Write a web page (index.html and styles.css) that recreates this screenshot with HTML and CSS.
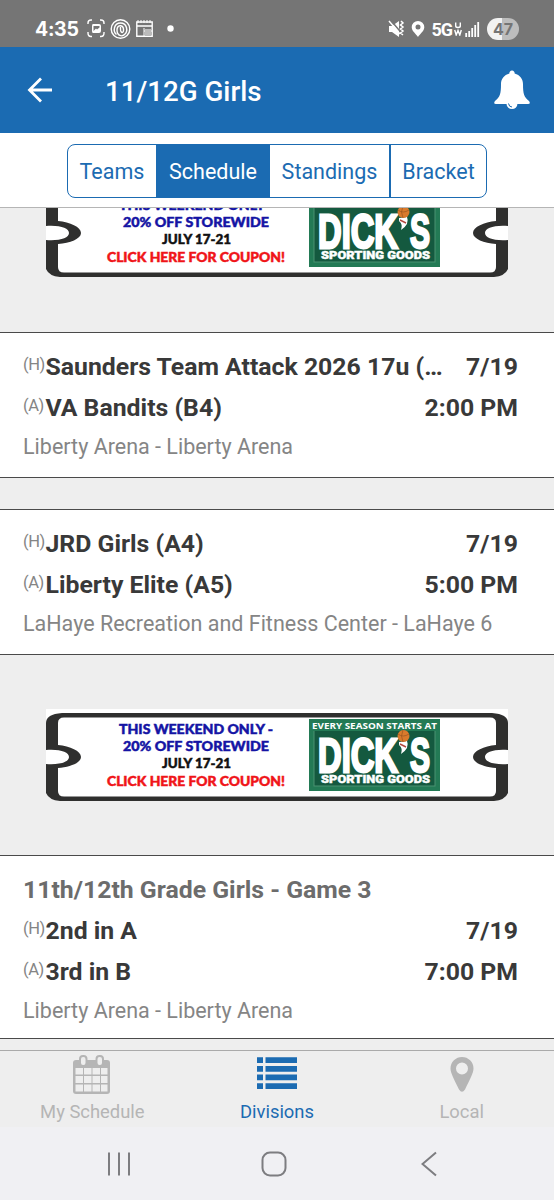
FILE: index.html
```html
<!DOCTYPE html>
<html lang="en">
<head>
  <meta charset="UTF-8" />
  <meta name="viewport" content="width=device-width, initial-scale=1.0" />
  <title>11/12G Girls - Schedule</title>
  <link rel="stylesheet" href="styles.css">
</head>
<body>
  <!-- ticket coupon, used for every ad slot -->
  <svg class="defs" width="0" height="0" aria-hidden="true">
    <symbol id="coupon" viewBox="0 0 462 92">
      <rect width="462" height="92" fill="#fff" />
      <path fill="#2f2f2e" d="M16 4H446Q462 5 462 14V92H0V14Q0 5 16 4Z" />
      <path fill="#fff" d="M18 8.500H444Q450 8.500 450 14V82Q450 87.500 444 87.500H18Q12 87.500 12 82V14Q12 8.500 18 8.500Z" />
      <path fill="#2f2f2e" d="M0 36H12C24 37 35 42 35 48S24 58 12 59H0ZM462 36H450C438 37 427 42 427 48S438 58 450 59H462Z" />
      <path fill="#fff" d="M0 41C14 40 23 43 23 48S14 56 0 55ZM462 41C448 40 439 43 439 48S448 56 462 55Z" />
      <path fill="#eee" d="M0 84Q3 91 14 92H0ZM462 84Q459 91 448 92H462Z" />
      <g class="coupon-text">
        <text x="73" y="24.500" fill="#1414a4" stroke="#1414a4" textLength="154" lengthAdjust="spacingAndGlyphs">THIS WEEKEND ONLY -</text>
        <text x="77" y="41.500" fill="#1414a4" stroke="#1414a4" textLength="146" lengthAdjust="spacingAndGlyphs">20% OFF STOREWIDE</text>
        <text x="116" y="59" fill="#111" stroke="#111" textLength="69" lengthAdjust="spacingAndGlyphs">JULY 17-21</text>
        <text x="61" y="76.500" fill="#f01418" stroke="#f01418" textLength="178" lengthAdjust="spacingAndGlyphs">CLICK HERE FOR COUPON!</text>
      </g>
      <rect x="263" y="10" width="131" height="72" fill="#237a55" />
      <rect x="268" y="15" width="121" height="62" fill="#14593f" stroke="#4b9273" />
      <rect x="264" y="11" width="129" height="11" fill="#237a55" />
      <g fill="#fff" stroke="#fff">
        <text class="logo-small" x="266" y="20" textLength="125" lengthAdjust="spacingAndGlyphs">EVERY SEASON STARTS AT</text>
        <text class="logo-big" x="0" y="0" transform="translate(272 63) scale(1 1.750)" textLength="80" lengthAdjust="spacingAndGlyphs">DICK</text>
        <text class="logo-big" x="0" y="0" transform="translate(364 63) scale(1 1.750)" textLength="20" lengthAdjust="spacingAndGlyphs">S</text>
        <text class="logo-sub" x="275" y="74" textLength="109" lengthAdjust="spacingAndGlyphs">SPORTING GOODS</text>
      </g>
      <path fill="#fff" d="M353 33L361 32Q364 39 355 45Q357 39 353 36Z" />
      <path d="M354 35L360 38" stroke="#b4493e" stroke-width="1.500" />
      <circle cx="357.500" cy="27" r="6" fill="#d97a2c" />
      <path d="M352 25Q357 29 363 25M357 21Q354 27 357 33" fill="none" stroke="#9a5420" stroke-width=".7" />
    </symbol>
  </svg>

  <div class="status-bar">
    <span class="clock">4:35</span>
    <svg class="status-left" width="92" height="22" viewBox="0 0 92 22" fill="none" stroke="#fff" stroke-width="1.400">
      <path d="M1 6V5Q1 2 4 2H5M13 2H14Q17 2 17 5V6M17 14V15Q17 18.500 14 18.500H13M5 18.500H4Q1 18.500 1 15V14" />
      <path fill="#fff" stroke="none" fill-rule="evenodd" d="M6 6H12Q14 6 14 8V13Q14 15 12 15H6Q5 15 5 13V8Q5 6 6 6ZM6.500 13L9 10.500L10 11.500L12.500 9.500V8H6.500Z" />
      <circle cx="33.500" cy="11" r="9.300" />
      <path d="M29.500 16.500C25.500 13 27 5 33.500 5S41.500 13 37.500 16.500C35 19 30 18 30 12C30 7 36 6 36.500 11C37 16 33 16 33.500 9" />
      <path d="M49.800 4H65.200V18.200H49.800ZM50 8H65" />
      <path d="M51 2V5M54 2V5M57 2V5M60 2V5M63 2V5" stroke-width="1" />
      <path d="M57 10V18M57 13H65" stroke-width="1" />
      <path d="M58 11H64V17.500H58Z" fill="#bbb" stroke="none" />
      <circle cx="83.500" cy="10.500" r="3.200" fill="#fff" stroke="none" />
    </svg>
    <div class="status-right">
      <svg width="38" height="20" viewBox="0 0 38 20">
        <path fill="#fff" d="M1 7H4L11 2V18L4 13H1Z" />
        <path d="M2.500 1L13.500 14" stroke="#757575" stroke-width="1.500" />
        <path d="M1 2L12 15M13 2L15 4L12.500 6L15 8L12.500 10L15 12L12.500 14L15 16" fill="none" stroke="#fff" stroke-width="1.500" />
        <path fill="#fff" fill-rule="evenodd" d="M30 2A6.300 6.300 0 0 1 36.300 8.300C36.300 12 32 15 30 18C28 15 23.700 12 23.700 8.300A6.300 6.300 0 0 1 30 2ZM30 5.500A2.500 2.500 0 1 0 30 10.500A2.500 2.500 0 1 0 30 5.500Z" />
      </svg>
      <span class="network">5G</span>
      <svg class="network-uw" width="8" height="14" viewBox="0 0 8 14" fill="none" stroke="#fff" stroke-width="1.400">
        <path d="M1.700 .5V4Q1.700 5.500 4 5.500T6.300 4V.5M.7 8L2.200 13L4 8.500L5.800 13L7.300 8" />
      </svg>
      <svg class="signal" width="15" height="16" viewBox="0 0 15 16">
        <path d="M1.200 12V16M4.200 10V16M7.200 7V16M10.200 4V16M13.200 1V16" stroke="#fff" stroke-width="1.800" />
      </svg>
      <span class="battery">47</span>
    </div>
  </div>

  <header class="app-bar">
    <svg width="26" height="26" viewBox="0 0 26 26" fill="none" stroke="#fff" stroke-width="2.800">
      <path d="M25 13H2M14 1.500L2.500 13L14 24.500" />
    </svg>
    <h1>11/12G Girls</h1>
    <svg class="bell" width="38" height="40" viewBox="0 0 38 40">
      <path fill="#fff" d="M19 0.500A2.600 2.600 0 0 1 21.600 3.500C27 5 30 9 30 14C30 24 31 27 36 31Q38 34 35 34H3Q0 34 2 31C7 27 8 24 8 14C8 9 11 5 16.400 3.500A2.600 2.600 0 0 1 19 0.500Z" />
      <circle cx="19" cy="33.500" r="5.500" fill="#fff" />
      <path d="M15.500 33.500Q16 37 19 37" fill="none" stroke="#1b6bb2" stroke-width="1" />
    </svg>
  </header>

  <nav class="tabs">
    <div class="segmented">
      <a class="teams">Teams</a>
      <a class="schedule active">Schedule</a>
      <a class="standings">Standings</a>
      <a class="bracket">Bracket</a>
    </div>
  </nav>

  <main class="games">
    <div class="ad ad-first"><svg width="462" height="92"><use href="#coupon" /></svg></div>

    <section class="game">
      <div class="row"><small>(H)</small><b class="team">Saunders Team Attack 2026 17u (…</b><b>7/19</b></div>
      <div class="row"><small>(A)</small><b class="team">VA Bandits (B4)</b><b>2:00 PM</b></div>
      <p class="venue">Liberty Arena - Liberty Arena</p>
    </section>

    <section class="game second">
      <div class="row"><small>(H)</small><b class="team">JRD Girls (A4)</b><b>7/19</b></div>
      <div class="row"><small>(A)</small><b class="team">Liberty Elite (A5)</b><b>5:00 PM</b></div>
      <p class="venue">LaHaye Recreation and Fitness Center - LaHaye 6</p>
    </section>

    <div class="ad"><svg width="462" height="92"><use href="#coupon" /></svg></div>

    <section class="game last">
      <h2 class="row">11th/12th Grade Girls - Game 3</h2>
      <div class="row"><small>(H)</small><b class="team">2nd in A</b><b>7/19</b></div>
      <div class="row"><small>(A)</small><b class="team">3rd in B</b><b>7:00 PM</b></div>
      <p class="venue">Liberty Arena - Liberty Arena</p>
    </section>
  </main>

  <nav class="bottom-tabs">
    <a>
      <svg width="38" height="42" viewBox="0 0 38 42">
        <rect x="0" y="5" width="37" height="34" rx="3" fill="#b5b5b5" />
        <path fill="#eee" d="M2.500 13H10V19.500H2.500ZM11 13H18.500V19.500H11ZM19.500 13H27V19.500H19.500ZM28 13H34.500V19.500H28ZM2.500 21H10V28H2.500ZM11 21H18.500V28H11ZM19.500 21H27V28H19.500ZM28 21H34.500V28H28ZM2.500 29.500H10V36.500H2.500ZM11 29.500H18.500V36.500H11ZM19.500 29.500H27V36.500H19.500ZM28 29.500H34.500V36.500H28Z" />
        <rect x="7" y="1" width="6.500" height="10" rx="3" fill="#eee" stroke="#b5b5b5" stroke-width="2" />
        <rect x="23.500" y="1" width="6.500" height="10" rx="3" fill="#eee" stroke="#b5b5b5" stroke-width="2" />
      </svg>
      <span>My Schedule</span>
    </a>
    <a class="active">
      <svg width="40" height="42" viewBox="0 0 40 42" fill="#1b6bb2">
        <path d="M0 2.300H6V8H0ZM8.500 2.300H40V8H8.500ZM0 11H6V16.700H0ZM8.500 11H40V16.700H8.500ZM0 19.600H6V25.300H0ZM8.500 19.600H40V25.300H8.500ZM0 28.300H6V34H0ZM8.500 28.300H40V34H8.500Z" />
      </svg>
      <span>Divisions</span>
    </a>
    <a>
      <svg width="24" height="42" viewBox="0 0 24 42">
        <path fill="#b5b5b5" fill-rule="evenodd" d="M12 2A11.500 11.500 0 0 1 23.500 13.500C23.500 18 20 24 15 34.500Q12 39 9 34.500C4 24 .5 18 .5 13.500A11.500 11.500 0 0 1 12 2ZM12 7.500A6 6 0 1 0 12 19.500A6 6 0 1 0 12 7.500Z" />
      </svg>
      <span>Local</span>
    </a>
  </nav>

  <div class="system-nav">
    <svg width="24" height="26" viewBox="0 0 24 26" stroke="#7d7d80" stroke-width="2"><path d="M2 1.500V24.500M12 1.500V24.500M22 1.500V24.500" /></svg>
    <svg class="home" width="26" height="26" viewBox="0 0 26 26" fill="none" stroke="#7d7d80" stroke-width="2"><rect x="1.500" y="1.500" width="23" height="23" rx="7.500" /></svg>
    <svg class="back" width="16" height="26" viewBox="0 0 16 26" fill="none" stroke="#7d7d80" stroke-width="2"><path d="M15 1.500L1.500 13L15 24.500" /></svg>
  </div>
</body>
</html>
```
FILE: styles.css
```css
:root {
  --blue: #1b6bb2;
  --bg: #eeeeee;
  --line: #4a4a4a;
  --text: #393939;
  --muted: #858585;
  --inactive: #b5b5b5;
}
* {
  box-sizing: border-box;
}
body {
  margin: 0;
  height: 1200px;
  display: flex;
  flex-direction: column;
  overflow: hidden;
  font-family: Roboto, sans-serif;
  background: var(--bg);
  color: var(--text);
}
svg {
  display: block;
  flex: none;
}
.defs {
  height: 0;
}

/* status bar */
.status-bar {
  height: 47px;
  padding: 11px 35px 0;
  display: flex;
  align-items: center;
  background: #757575;
  color: #fff;
}
.clock {
  width: 43px;
  font: 700 19.5px Inter, sans-serif;
  letter-spacing: -0.3px;
  white-space: nowrap;
}
.status-left {
  margin-left: 9px;
}
.status-right {
  margin-left: auto;
  display: flex;
  align-items: center;
}
.network {
  margin-left: 5px;
  font: 700 18px Roboto, sans-serif;
  letter-spacing: -1px;
}
.network-uw {
  margin: 0 3px 0 2px;
}
.battery {
  width: 32px;
  height: 22px;
  margin-left: 7px;
  border-radius: 11px;
  background: linear-gradient(to right, #f2f2f2 47%, #bdbdbd 47%);
  color: #757575;
  font: 700 16px/22px Inter, sans-serif;
  text-align: center;
}

/* title bar */
.app-bar {
  height: 86px;
  padding: 0 23px 0 27px;
  display: flex;
  align-items: center;
  background: var(--blue);
  color: #fff;
}
.app-bar h1 {
  margin: 3px 0 0 52px;
  font-size: 27.7px;
  font-weight: 500;
}
.bell {
  margin-left: auto;
}

/* segmented control */
.tabs {
  height: 75px;
  padding-top: 11px;
  display: flex;
  justify-content: center;
  background: #fff;
  border-bottom: 1px solid #b5b5b5;
}
.segmented {
  width: 420px;
  height: 54px;
  display: flex;
  border: 1.5px solid var(--blue);
  border-radius: 8px;
  overflow: hidden;
}
.segmented a {
  color: var(--blue);
  font-size: 21.5px;
  line-height: 54px;
  text-align: center;
}
.segmented .active {
  background: var(--blue);
  color: #fff;
}
.teams {
  width: 88px;
}
.schedule {
  width: 114px;
}
.standings {
  width: 121px;
  border-right: 2px solid var(--blue);
}
.bracket {
  flex: 1;
}

/* game list */
.games {
  height: 842px;
  overflow: hidden;
}
.ad {
  height: 200px;
  padding: 54px 46px;
  display: flex;
  align-items: flex-start;
}
.ad-first {
  height: 124px;
  padding-top: 0;
}
.ad-first svg {
  margin-top: -23px;
}
.coupon-text {
  font: 900 14px Lato, sans-serif;
  stroke-width: 0.5px;
}
.logo-small {
  font: 700 9.5px "Open Sans", sans-serif;
  stroke-width: 0;
}
.logo-big {
  font: 900 28px "Liberation Sans", sans-serif;
  font-size: 28px;
  stroke-width: 1.6px;
}
.logo-sub {
  font: 900 10.5px Roboto, sans-serif;
  stroke-width: 0.4px;
}
.game {
  height: 146px;
  padding: 13px 36px 0 23px;
  background: #fff;
  border-top: 1px solid var(--line);
  border-bottom: 1px solid var(--line);
}
.second {
  margin-top: 31px;
}
.last {
  height: 184px;
}
.row {
  height: 41px;
  margin: 0;
  display: flex;
  align-items: center;
  font-size: 24.8px;
  line-height: 41px;
}
.row b {
  font-weight: 700;
}
.row small {
  width: 22.5px;
  margin-top: -5px;
  color: var(--muted);
  font-size: 16.5px;
  letter-spacing: -0.4px;
  white-space: nowrap;
}
.team {
  flex: 1;
  white-space: nowrap;
}
h2.row {
  color: #6c6c6c;
  font-weight: 700;
}
.venue {
  margin: 0;
  color: var(--muted);
  font-size: 21.5px;
  line-height: 37px;
}

/* bottom navigation */
.bottom-tabs {
  height: 77px;
  padding-top: 4px;
  display: grid;
  grid-template-columns: repeat(3, 1fr);
  border-top: 1px solid #aaa;
}
.bottom-tabs a {
  display: flex;
  flex-direction: column;
  align-items: center;
  color: var(--inactive);
  font-size: 18.4px;
}
.bottom-tabs span {
  margin-top: 4px;
}
.bottom-tabs .active {
  color: var(--blue);
}
.system-nav {
  height: 73px;
  padding-left: 107px;
  display: flex;
  align-items: center;
  background: #f0f0f3;
}
.home {
  margin-left: 130px;
}
.back {
  margin-left: 134px;
}
```
